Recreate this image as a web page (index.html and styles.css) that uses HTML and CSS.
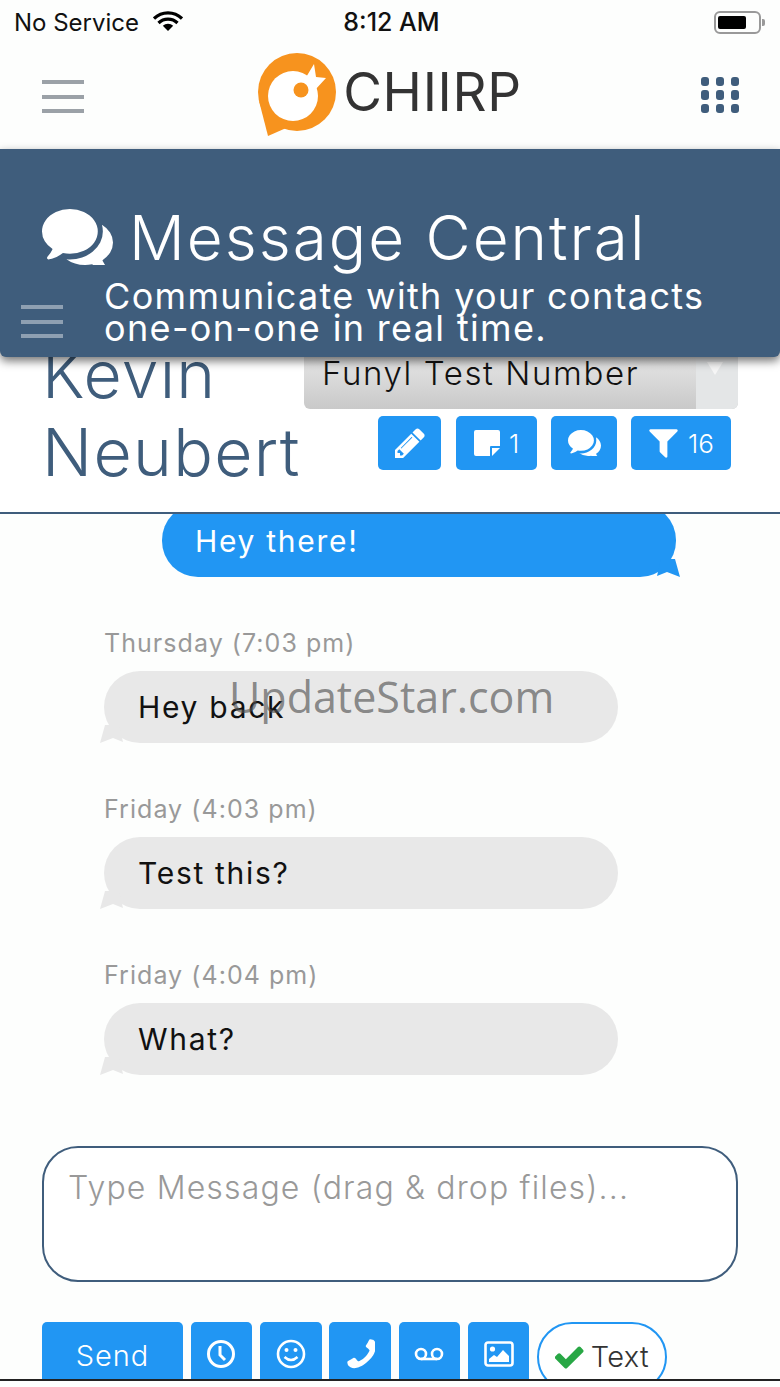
FILE: index.html
```html
<!DOCTYPE html>
<html lang="en">

<head>
  <meta charset="UTF-8">
  <meta name="viewport" content="width=device-width, initial-scale=1.0">
  <title>Chiirp - Message Central</title>
  <link rel="stylesheet" href="styles.css">
</head>

<body>
  <div class="phone">
    <div class="status-bar">
      <div class="status-left">
        <span>No Service</span>
        <svg class="wifi" viewBox="0 0 30 20"><path d="M1 7.5a20 20 0 0 1 28 0M5.5 12a13.5 13.5 0 0 1 19 0" fill="none" stroke="#000" stroke-width="3.2"/><path d="M9.8 14.8a7.4 7.4 0 0 1 10.4 0L15 20z" fill="#000"/></svg>
      </div>
      <span class="status-time">8:12 AM</span>
      <div class="status-right">
        <div class="battery"><div class="battery-level"></div></div>
      </div>
    </div>

    <header class="topbar">
      <div class="burger"><span></span><span></span><span></span></div>
      <div class="logo">
        <svg class="logo-mark" viewBox="0 0 80 84">
          <circle cx="40" cy="39" r="39" fill="#f7931e"/>
          <path d="M2 48 11 83 36 72z" fill="#f7931e"/>
          <circle cx="36" cy="43" r="25" fill="#fff"/>
          <path d="M48 26 57 11 59 24 69 25 58 37z" fill="#fff"/>
          <circle cx="44" cy="37" r="7.5" fill="#f7931e"/>
        </svg>
        <span class="logo-text">CHIIRP</span>
      </div>
      <svg class="apps" viewBox="0 0 38 36" fill="#3f5d7c">
        <rect x="0" y="0" width="8" height="9" rx="3"/><rect x="15" y="0" width="8" height="9" rx="3"/><rect x="30" y="0" width="8" height="9" rx="3"/>
        <rect x="0" y="13" width="8" height="10" rx="3"/><rect x="15" y="13" width="8" height="10" rx="3"/><rect x="30" y="13" width="8" height="10" rx="3"/>
        <rect x="0" y="27" width="8" height="9" rx="3"/><rect x="15" y="27" width="8" height="9" rx="3"/><rect x="30" y="27" width="8" height="9" rx="3"/>
      </svg>
    </header>

    <section class="banner">
      <div class="burger burger-light"><span></span><span></span><span></span></div>
      <h1 class="banner-title">
        <svg class="banner-icon" viewBox="0 256 1792 1280" preserveAspectRatio="none" fill="#fff"><path d="M1408 768q0 139-94 257t-256.500 186.500-353.500 68.500q-86 0-176-16-124 88-278 128-36 9-86 16h-3q-11 0-20.500-8t-11.500-21q-1-3-1-6.500t.5-6.500 2-6l2.500-5 3.500-5.500 4-5 4.500-5 4-4.500q5-6 23-25t26-29.500 22.500-29 25-38.500 20.500-44q-124-72-195-177t-71-224q0-139 94-257t256.500-186.500 353.500-68.500 353.500 68.500 256.500 186.500 94 257zm384 256q0 120-71 224.500t-195 176.500q10 24 20.500 44t25 38.500 22.500 29 26 29.500 23 25q1 1 4 4.500t4.500 5 4 5 3.500 5.500l2.500 5 2 6 .5 6.500-1 6.500q-3 14-13 22t-22 7q-50-7-86-16-154-40-278-128-90 16-176 16-271 0-472-132 58 4 88 4 161 0 309-45t264-129q125-92 192-212t67-254q0-77-23-152 129 71 204 178t75 230z"/></svg>
        Message Central
      </h1>
      <p class="banner-sub">Communicate with your contacts<br>one-on-one in real time.</p>
    </section>

    <section class="contact">
      <div class="contact-name">Kevin<br>Neubert</div>
      <div class="contact-side">
        <div class="number-select">
          <span class="number-label">Funyl Test Number</span>
          <span class="number-arrow"></span>
        </div>
        <div class="contact-tools">
          <div class="tool tool-edit">
            <svg class="pencil-icon" viewBox="128 128 1536 1536" fill="#fff"><path d="M491 1536l91-91-235-235-91 91v107h128v128h107zm523-928q0-22-22-22-10 0-17 7l-542 542q-7 7-7 17 0 22 22 22 10 0 17-7l542-542q7-7 7-17zm-54-192l416 416-832 832h-416v-416zm683 96q0 53-37 90l-166 166-416-416 166-165q36-38 90-38 53 0 91 38l235 234q37 39 37 91z"/></svg>
          </div>
          <div class="tool tool-note">
            <svg class="note-icon" viewBox="0 0 26 26" fill="#fff"><path d="M0 2q0-2 2-2h22q2 0 2 2v14h-9q-1 0-1 1v9H2q-2 0-2-2z"/><path d="M18 18h8l-8 8z"/></svg>
            1
          </div>
          <div class="tool tool-chat">
            <svg class="tool-icon" viewBox="0 256 1792 1280" preserveAspectRatio="none" fill="#fff"><path d="M1408 768q0 139-94 257t-256.500 186.500-353.500 68.500q-86 0-176-16-124 88-278 128-36 9-86 16h-3q-11 0-20.500-8t-11.500-21q-1-3-1-6.500t.5-6.500 2-6l2.500-5 3.500-5.500 4-5 4.500-5 4-4.500q5-6 23-25t26-29.500 22.500-29 25-38.500 20.500-44q-124-72-195-177t-71-224q0-139 94-257t256.500-186.500 353.500-68.500 353.500 68.500 256.500 186.500 94 257zm384 256q0 120-71 224.500t-195 176.500q10 24 20.500 44t25 38.500 22.500 29 26 29.500 23 25q1 1 4 4.500t4.500 5 4 5 3.500 5.500l2.500 5 2 6 .5 6.500-1 6.500q-3 14-13 22t-22 7q-50-7-86-16-154-40-278-128-90 16-176 16-271 0-472-132 58 4 88 4 161 0 309-45t264-129q125-92 192-212t67-254q0-77-23-152 129 71 204 178t75 230z"/></svg>
          </div>
          <div class="tool tool-filter">
            <svg class="filter-icon" viewBox="128 256 1536 1408" fill="#fff"><path d="M1595 295q17 41-14 70l-493 493v742q0 42-39 59-13 5-25 5-27 0-45-19l-256-256q-19-19-19-45v-486l-493-493q-31-29-14-70 17-39 59-39h1280q42 0 59 39z"/></svg>
            16
          </div>
        </div>
      </div>
    </section>

    <main class="thread">
      <div class="msg msg-out">
        <div class="bubble bubble-out">Hey there!</div>
      </div>
      <div class="msg">
        <div class="msg-time">Thursday (7:03 pm)</div>
        <div class="bubble">Hey back</div>
      </div>
      <div class="msg">
        <div class="msg-time">Friday (4:03 pm)</div>
        <div class="bubble">Test this?</div>
      </div>
      <div class="msg">
        <div class="msg-time">Friday (4:04 pm)</div>
        <div class="bubble">What?</div>
      </div>
      <div class="watermark">UpdateStar.com</div>
    </main>

    <div class="compose">Type Message (drag &amp; drop files)...</div>

    <div class="actions">
      <div class="action action-send">Send</div>
      <div class="action">
        <svg class="action-icon" viewBox="0 0 30 30" fill="none" stroke="#fff" stroke-width="3"><circle cx="15" cy="15" r="12.500"/><path d="M14 7v9l5 5"/></svg>
      </div>
      <div class="action">
        <svg class="action-icon" viewBox="0 0 30 30" fill="none" stroke="#fff" stroke-width="2.600"><circle cx="15" cy="15" r="13"/><path d="M8.500 18q6.500 6 13 0"/><circle cx="10.500" cy="11" r="2" fill="#fff" stroke="none"/><circle cx="19.500" cy="11" r="2" fill="#fff" stroke="none"/></svg>
      </div>
      <div class="action">
        <svg class="action-icon phone-icon" viewBox="256 128 1408 1536" fill="#fff"><path d="M1600 1240q0 27-10 70.500t-21 68.500q-21 50-122 106-94 51-186 51-27 0-53-3.500t-57.500-12.500-47-14.500-55.500-20.500-49-18q-98-35-175-83-127-79-264-216t-216-264q-48-77-83-175-3-9-18-49t-20.500-55.500-14.500-47-12.500-57.500-3.500-53q0-92 51-186 56-101 106-122 25-11 68.500-21t70.500-10q14 0 21 3 18 6 53 76 11 19 30 54t35 63.500 31 53.500q3 4 17.500 25t21.500 35.500 7 28.500q0 20-28.500 50t-62 55-62 53-28.500 46q0 9 5 22.500t8.500 20.500 14 24 11.500 19q76 137 174 235t235 174q2 1 19 11.500t24 14 20.500 8.500 22.500 5q18 0 46-28.500t53-62 55-62 50-28.500q14 0 28.500 7t35.500 21.500 25 17.500q25 15 53.500 31t63.500 35 54 30q70 35 76 53 3 7 3 21z" transform="matrix(-1 0 0 1 1920 0)"/></svg>
      </div>
      <div class="action">
        <svg class="action-icon" viewBox="0 0 30 30" fill="none" stroke="#fff" stroke-width="2.600"><circle cx="7" cy="15" r="5"/><circle cx="23" cy="15" r="5"/><path d="M7 20h16"/></svg>
      </div>
      <div class="action">
        <svg class="action-icon" viewBox="0 0 30 30" fill="#fff"><rect x="1.500" y="3.500" width="27" height="23" rx="2.500" fill="none" stroke="#fff" stroke-width="2.600"/><circle cx="8.500" cy="10" r="2.600"/><path d="M5 23v-3l5-4 3 2 6-7 6 6v6z"/></svg>
      </div>
      <div class="channel">
        <svg class="check" viewBox="128 256 1568 1280" fill="#28a745"><path d="M1671 566q0 40-28 68l-724 724-136 136q-28 28-68 28t-68-28l-136-136-362-362q-28-28-28-68t28-68l136-136q28-28 68-28t68 28l294 295 656-657q28-28 68-28t68 28l136 136q28 28 28 68z"/></svg>
        Text
      </div>
    </div>
  </div>
</body>

</html>
```

FILE: styles.css
```css
* {
  box-sizing: border-box;
}

body {
  margin: 0;
  background: #fff;
  font-family: 'Inter', 'Open Sans', sans-serif;
}

.phone {
  width: 780px;
  height: 1387px;
  overflow: hidden;
  position: relative;
  background: #fdfefd;
}

/* Status bar */
.status-bar {
  height: 44px;
  display: flex;
  align-items: center;
  padding: 0 19px 0 14px;
  font-size: 24px;
  color: #111;
}

.status-left {
  flex: 1;
  display: flex;
  align-items: center;
  gap: 14px;
}

.status-right {
  flex: 1;
  display: flex;
  justify-content: flex-end;
}

.wifi {
  width: 30px;
  height: 20px;
  margin-top: -3px;
}

.status-time {
  font-size: 25px;
  font-weight: 500;
  margin-left: 8px;
}

.battery {
  width: 47px;
  height: 23px;
  border: 2px solid #999;
  border-radius: 6px;
  padding: 3px 2px;
  position: relative;
}

.battery::after {
  content: '';
  position: absolute;
  right: -6px;
  top: 6px;
  width: 3px;
  height: 7px;
  background: #999;
  border-radius: 0 2px 2px 0;
}

.battery-level {
  width: 28px;
  height: 100%;
  background: #000;
  border-radius: 2px;
}

/* Top bar */
.topbar {
  height: 105px;
  display: flex;
  align-items: center;
  justify-content: space-between;
  padding: 0 42px;
}

.burger {
  width: 42px;
  height: 33px;
  display: flex;
  flex-direction: column;
  justify-content: space-between;
}

.burger span {
  height: 4px;
  background: #9ba1a7;
}

.logo {
  display: flex;
  align-items: center;
  gap: 6px;
  margin: -4px 0 0 -6px;
}

.logo-mark {
  width: 80px;
  height: 84px;
}

.logo-text {
  font-size: 53px;
  letter-spacing: 0.7px;
  color: #333;
  font-weight: 400;
  margin-top: -6px;
}

.apps {
  width: 38px;
  height: 36px;
  margin-right: -1px;
  margin-top: -4px;
}

/* Banner */
.banner {
  height: 208px;
  position: relative;
  z-index: 2;
  margin-bottom: -20px;
  background: #3f5d7c;
  border-radius: 0 0 6px 6px;
  box-shadow: 0 4px 10px rgba(0, 0, 0, 0.55);
  color: #fff;
  padding: 50px 0 0 42px;
}

.burger-light {
  position: absolute;
  left: 21px;
  top: 156px;
}

.burger-light span {
  background: #8fa0b2;
}

.banner-title {
  margin: 0;
  display: flex;
  align-items: center;
  gap: 16px;
  height: 76px;
  font-size: 62px;
  font-weight: 300;
  letter-spacing: 2px;
}

.banner-icon {
  width: 71px;
  height: 56px;
}

.banner-sub {
  margin: 5px 0 0 62px;
  font-size: 36px;
  line-height: 32px;
  letter-spacing: 1.35px;
}

/* Contact row */
.contact {
  height: 177px;
  border-bottom: 2px solid #3f5d7c;
  display: flex;
  padding: 0 42px;
  background: #fff;
}

.contact-name {
  width: 262px;
  margin-top: -2px;
  font-size: 66px;
  line-height: 78px;
  font-weight: 300;
  letter-spacing: 1.3px;
  color: #3f5d7c;
}

.contact-side {
  width: 434px;
}

.number-select {
  height: 72px;
  display: flex;
  justify-content: space-between;
  background: linear-gradient(#f0f0f0, #c9c9c9);
  border-radius: 0 0 6px 6px;
  color: #111;
  font-size: 33px;
  font-weight: 300;
  letter-spacing: 1.6px;
}

.number-label {
  padding: 16px 0 0 18px;
}

.number-arrow {
  width: 42px;
  background: #e4e6e7;
  border-radius: 0 0 6px 0;
  position: relative;
}

.number-arrow::after {
  content: '';
  position: absolute;
  left: 11px;
  top: 25px;
  border-style: solid;
  border-width: 13px 8px 0 8px;
  border-color: #f6f6f6 transparent transparent transparent;
}

.contact-tools {
  display: flex;
  gap: 15px;
  margin: 7px 0 0 74px;
}

.tool {
  height: 54px;
  display: flex;
  align-items: center;
  justify-content: center;
  gap: 9px;
  background: #2196f3;
  border-radius: 5px;
  color: #fff;
  font-size: 26px;
  font-weight: 300;
}

.tool-edit {
  width: 63px;
}

.tool-note {
  width: 81px;
}

.tool-chat {
  width: 66px;
  margin-left: -1px;
}

.tool-filter {
  width: 100px;
  margin-left: -1px;
}

.tool-icon {
  width: 33px;
  height: 26px;
}

.pencil-icon {
  width: 30px;
  height: 30px;
}

.note-icon {
  width: 26px;
  height: 26px;
}

.filter-icon {
  width: 31px;
  height: 29px;
}

/* Messages */
.thread {
  height: 632px;
  position: relative;
  overflow: hidden;
}

.msg {
  padding-left: 104px;
  margin-bottom: 52px;
}

.msg-out {
  padding-left: 162px;
  margin-top: -10px;
  margin-bottom: 52px;
}

.msg-time {
  height: 42px;
  font-size: 25px;
  line-height: 28px;
  color: #999;
  font-weight: 400;
  letter-spacing: 1.05px;
}

.bubble {
  width: 514px;
  height: 72px;
  position: relative;
  padding-left: 34px;
  border-radius: 36px;
  background: #e8e8e8;
  font-size: 30px;
  line-height: 72px;
  color: #111;
  letter-spacing: 1.7px;
}

.bubble::before {
  content: '';
  position: absolute;
  left: -5px;
  bottom: 0;
  width: 26px;
  height: 26px;
  background: #e8e8e8;
  clip-path: polygon(1px 26px, 6px 8px, 20px 8px, 24px 25px, 14px 21px);
}

.bubble-out {
  height: 73px;
  line-height: 75px;
  background: #2196f3;
  color: #fff;
  padding-left: 33px;
}

.bubble-out::before {
  left: auto;
  right: -5px;
  background: #2196f3;
  clip-path: polygon(25px 26px, 20px 8px, 6px 8px, 2px 25px, 12px 21px);
}

.watermark {
  position: absolute;
  left: 229px;
  top: 155px;
  font-family: 'Open Sans', sans-serif;
  font-size: 43px;
  line-height: 56px;
  color: rgba(80, 80, 80, 0.65);
}

/* Compose box */
.compose {
  height: 136px;
  margin: 0 42px 40px;
  padding: 20px 24px;
  border: 2px solid #3f5d7c;
  border-radius: 36px;
  background: #fff;
  font-size: 32px;
  font-weight: 300;
  color: #999;
  letter-spacing: 1.15px;
}

/* Action row */
.actions {
  height: 59px;
  display: flex;
  gap: 7.7px;
  padding-left: 42px;
  overflow: hidden;
  position: relative;
  border-bottom: 2px solid #222;
}

.action {
  width: 61.6px;
  height: 70px;
  padding-top: 17px;
  display: flex;
  justify-content: center;
  background: #2196f3;
  border-radius: 5px;
}

.action-send {
  width: 141px;
  color: #fff;
  font-size: 29px;
  font-weight: 300;
  padding-top: 16px;
  letter-spacing: 1px;
}

.action-icon {
  width: 30px;
  height: 30px;
}

.phone-icon {
  width: 29px;
  height: 32px;
}

.channel {
  width: 129.5px;
  height: 70px;
  display: flex;
  align-items: flex-start;
  justify-content: center;
  gap: 7px;
  padding-top: 15px;
  border: 2px solid #2196f3;
  border-radius: 35px;
  background: #fff;
  color: #333;
  font-size: 29px;
  font-weight: 300;
  letter-spacing: 0.3px;
}

.check {
  width: 29px;
  height: 24px;
  margin-top: 6px;
}
```
